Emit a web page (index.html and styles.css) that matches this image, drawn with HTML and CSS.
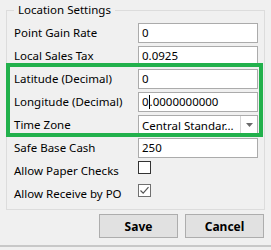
FILE: index.html
```html
<!DOCTYPE html>
<html>
<head>
<meta charset="utf-8">
<link rel="stylesheet" href="styles.css">
</head>
<body>
<div class="dialog">
  <fieldset class="group">
    <legend class="group-title">Location Settings</legend>
    <div class="form">
      <div class="lbl">Point Gain Rate</div>
      <div class="field">0</div>
      <div class="lbl">Local Sales Tax</div>
      <div class="field">0.0925</div>
      <div class="lbl">Latitude (Decimal)</div>
      <div class="field">0</div>
      <div class="lbl">Longitude (Decimal)</div>
      <div class="field">0<span class="caret"></span>.0000000000</div>
      <div class="lbl">Time Zone</div>
      <div class="combo">
        <span class="combo-text">Central Standar...</span>
        <span class="combo-btn"><svg width="7" height="4" viewBox="0 0 7 4"><path d="M0 0H7L3.5 4Z" fill="#6a6a6a"/></svg></span>
      </div>
      <div class="lbl">Safe Base Cash</div>
      <div class="field">250</div>
      <div class="lbl">Allow Paper Checks</div>
      <div class="check"></div>
      <div class="lbl">Allow Receive by PO</div>
      <div class="check checked"><svg width="11" height="11" viewBox="0 0 11 11"><path d="M1.5 5.5L4.2 8.2L9.5 2.2" fill="none" stroke="#555" stroke-width="1.2"/></svg></div>
    </div>
  </fieldset>
  <div class="buttons">
    <button class="btn">Save</button>
    <button class="btn">Cancel</button>
  </div>
  <div class="bottom-line"></div>
  <div class="highlight"></div>
</div>
</body>
</html>
```
FILE: styles.css
```css
html, body {
  margin: 0;
  padding: 0;
  background: #f0f0f0;
}
body {
  font-family: "Noto Sans", "Open Sans", sans-serif;
  font-size: 11.5px;
  color: #000;
}
.dialog {
  position: relative;
  width: 271px;
  height: 250px;
  padding-top: 2px;
  box-sizing: border-box;
}
.group {
  margin: 0 7px 0 6px;
  padding: 5px 6px 5px 7px;
  border: 1px solid #dcdcdc;
}
.group-title {
  margin-left: 0;
  padding: 0 4px;
  line-height: 16px;
}
.form {
  display: grid;
  grid-template-columns: 124px 120px;
  grid-auto-rows: 20px;
  row-gap: 3px;
}
.lbl {
  display: flex;
  align-items: center;
  line-height: 16px;
  white-space: nowrap;
}
.field {
  box-sizing: border-box;
  border: 1px solid #ababab;
  background: #fff;
  padding: 0 3px;
  display: flex;
  align-items: center;
  line-height: 16px;
}
.caret {
  display: inline-block;
  width: 1px;
  height: 14px;
  background: #000;
}
.combo {
  box-sizing: border-box;
  border: 1px solid #ababab;
  background: #fff;
  display: flex;
  align-items: stretch;
}
.combo-text {
  flex: 1;
  padding: 0 3px;
  display: flex;
  align-items: center;
  white-space: nowrap;
  overflow: hidden;
}
.combo-btn {
  width: 16px;
  border-left: 1px solid #d4d4d4;
  display: flex;
  align-items: center;
  justify-content: center;
}
.check {
  box-sizing: border-box;
  width: 13px;
  height: 13px;
  border: 1px solid #333;
  background: #fff;
  align-self: start;
  display: flex;
  align-items: center;
  justify-content: center;
}
.check.checked {
  border-color: #707070;
}
.buttons {
  display: flex;
  justify-content: flex-end;
  gap: 7px;
  margin: 4px 7px 0 0;
}
.btn {
  width: 79px;
  height: 24px;
  box-sizing: border-box;
  border: 1px solid #adadad;
  background: #e1e1e1;
  font-family: "Noto Sans", "Open Sans", sans-serif;
  font-size: 12px;
  font-weight: bold;
  color: #000;
  padding: 0;
}
.bottom-line {
  margin-top: 7px;
  height: 2px;
  background: #c8c8c8;
}
.highlight {
  position: absolute;
  left: 6px;
  top: 63px;
  width: 257px;
  height: 74px;
  box-sizing: border-box;
  border: 4px solid #22b14c;
}
```
